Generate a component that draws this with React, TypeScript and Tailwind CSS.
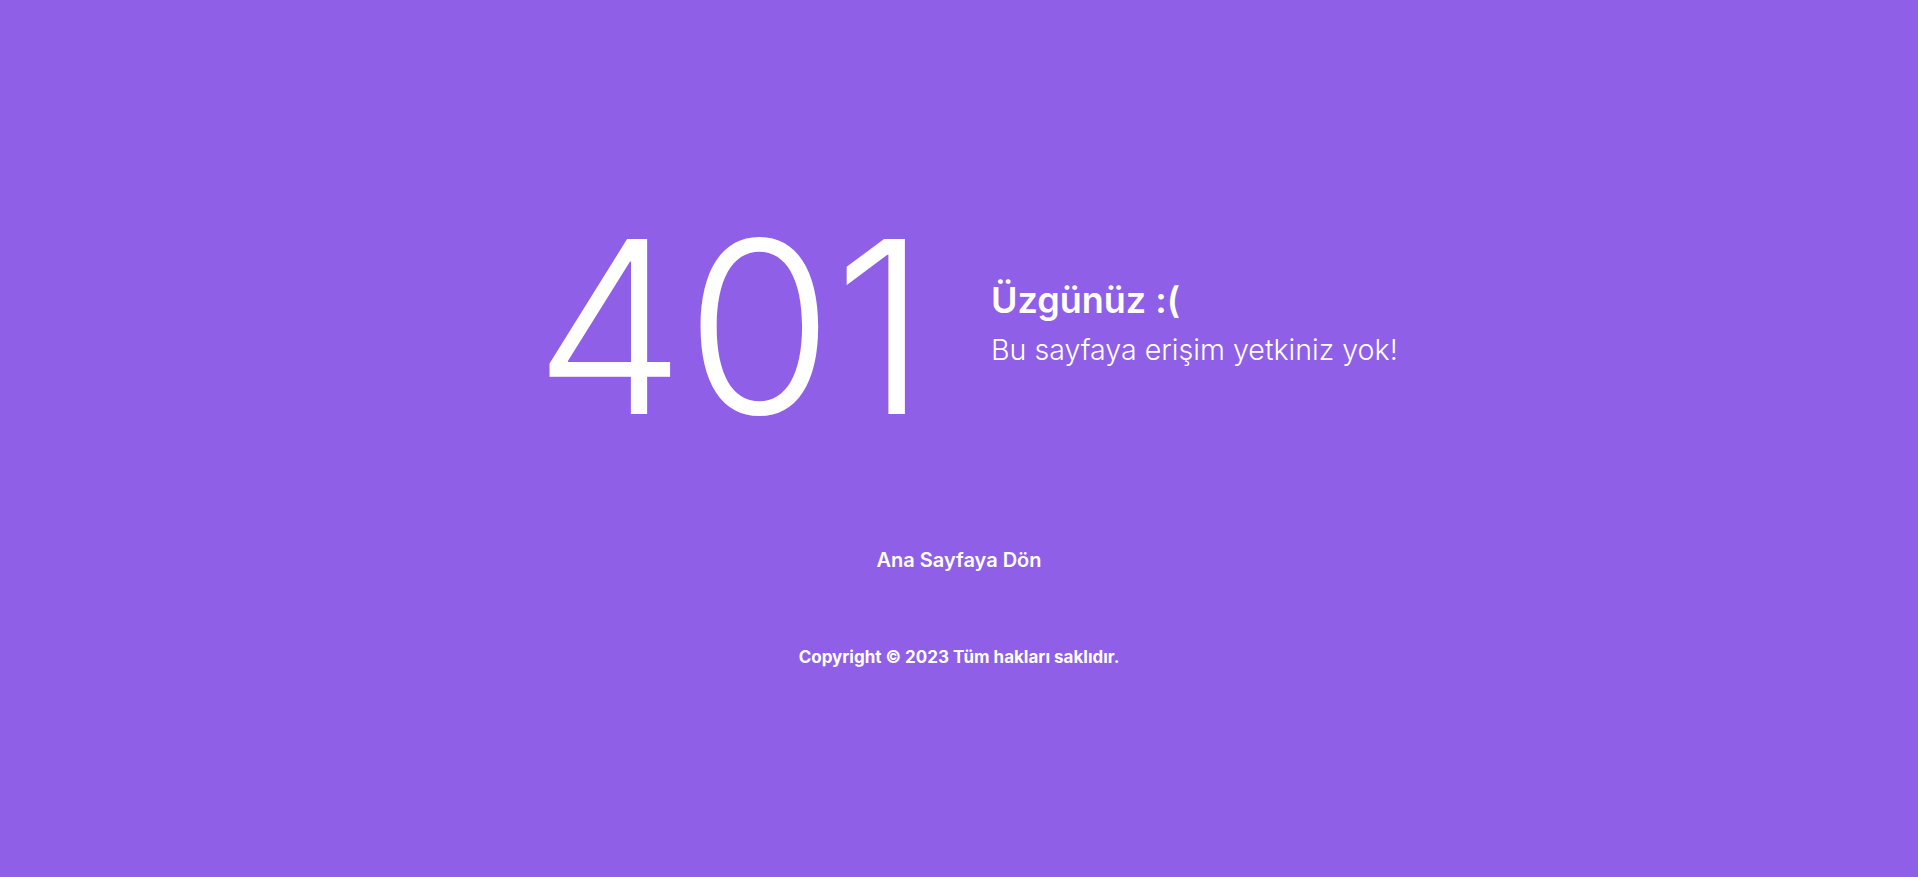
export default function App() {
  return (
    <div className="min-h-screen w-full bg-[#8f5fe8] text-white font-['Inter',sans-serif] flex flex-col items-center">
      <div className="flex items-center mt-[207px] ml-[14px]">
        <h1 className="text-[240px] leading-none font-light">401</h1>
        <div className="ml-[63px] mb-[8px] flex flex-col">
          <h2 className="text-[36px] font-semibold leading-[44px]">Üzgünüz :(</h2>
          <p className="mt-[10px] text-[28.6px] font-light leading-[36px]">Bu sayfaya erişim yetkiniz yok!</p>
        </div>
      </div>
      <a href="#" className="mt-[98px] text-[20px] font-semibold">
        Ana Sayfaya Dön
      </a>
      <p className="mt-[70px] text-[17px] font-bold">Copyright © 2023 Tüm hakları saklıdır.</p>
    </div>
  );
}
